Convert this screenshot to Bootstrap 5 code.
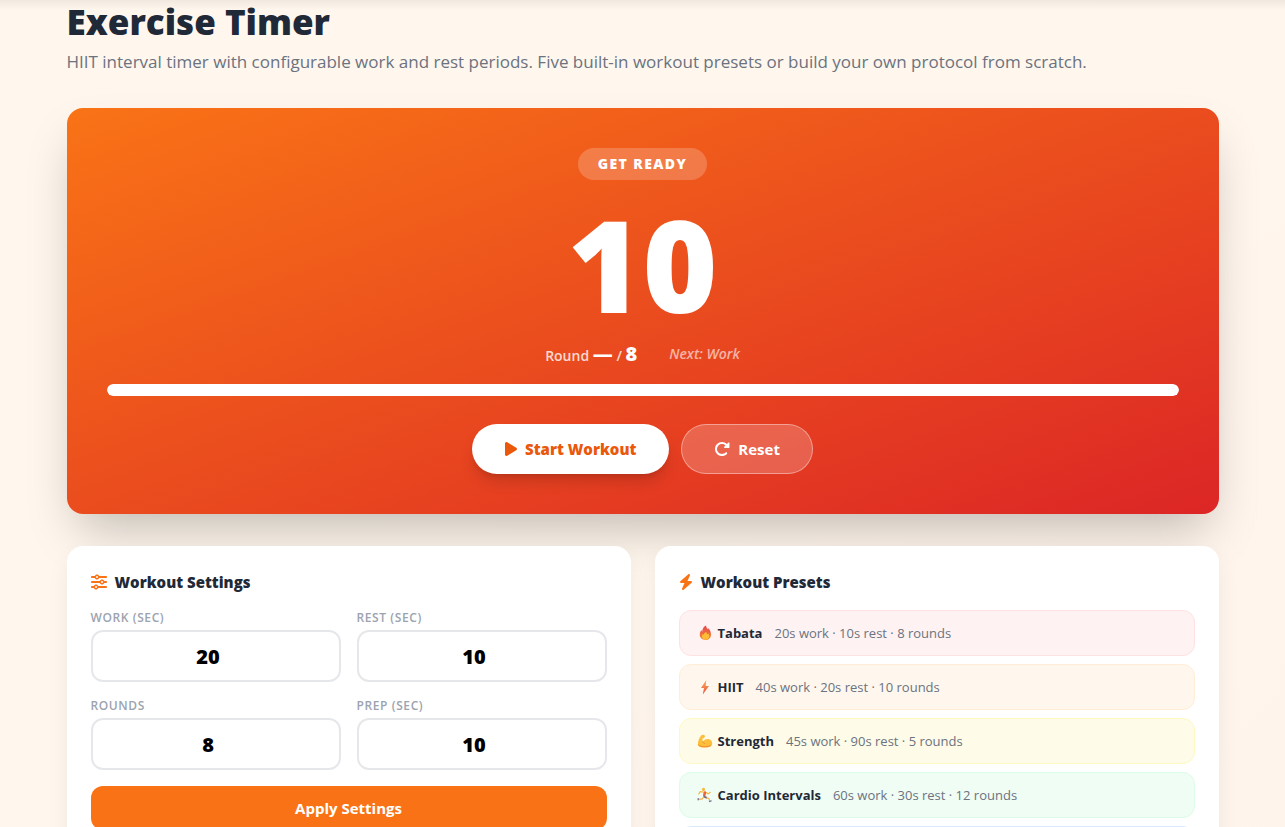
<!DOCTYPE html>
<html lang="en">
<head>
<meta charset="utf-8">
<meta name="viewport" content="width=device-width, initial-scale=1">
<title>Exercise Timer</title>
<link href="https://cdn.jsdelivr.net/npm/bootstrap@5.3.0/dist/css/bootstrap.min.css" rel="stylesheet">
<style>
  body {
    font-family: "Open Sans", "Noto Sans", sans-serif;
    color: #1f2937;
    height: 100vh;
    overflow: hidden;
    background:
      linear-gradient(rgba(0, 0, 0, .06), rgba(0, 0, 0, 0)) top / 100% 10px no-repeat,
      linear-gradient(135deg, #fff7ed 40%, #fff4ec);
  }
  .page { max-width: 1176px; padding-top: 2px; }
  .page-title { font-size: 35px; line-height: 40px; font-weight: 800; margin-bottom: 6px; }
  .page-lead { font-size: 17px; line-height: 28px; color: #6b7280; margin-bottom: 32px; }
  .icon { fill: currentColor; height: 16px; flex: none; }

  .timer-card {
    border-radius: 16px;
    padding: 40px;
    margin-bottom: 32px;
    background: linear-gradient(to bottom right, #f97316, #dc2626);
    box-shadow: 0 25px 50px -12px rgba(0, 0, 0, .25);
  }
  .phase {
    font-size: 14px; line-height: 20px; font-weight: 800; letter-spacing: .1em;
    padding: 6px 20px; background: rgba(255, 255, 255, .2);
  }
  .countdown { font-size: 128px; line-height: 128px; font-weight: 800; margin-top: 20px; }
  .round-row { font-size: 14px; line-height: 20px; font-weight: 600; margin: 16px 0 12px; }
  .round-label { color: rgba(255, 255, 255, .8); line-height: 28px; height: 28px; margin-top: -2px; margin-bottom: 2px; }
  .round-label strong { font-size: 20px; line-height: 20px; font-weight: 800; color: #fff; }
  .next-label { color: rgba(255, 255, 255, .6); }
  .timer-track { height: 12px; border-radius: 6px; background: rgba(255, 255, 255, .2); }
  .timer-track .progress-bar { background: #fff; border-radius: 6px; }
  .timer-actions { gap: 12px; margin-top: 28px; }
  .btn-pill { height: 50px; padding: 0 32px; font-size: 15px; border-radius: 25px; }
  .btn-start, .btn-start:hover { background: #fff; color: #ea580c; font-weight: 800; box-shadow: 0 10px 15px -3px rgba(0, 0, 0, .15), 0 4px 6px -4px rgba(0, 0, 0, .15); }
  .btn-reset, .btn-reset:hover { background: rgba(255, 255, 255, .2); color: #fff; font-weight: 700; border: 1px solid rgba(255, 255, 255, .4); }

  .panel { background: #fff; border-radius: 16px; padding: 24px; box-shadow: 0 10px 25px -3px rgba(0, 0, 0, .08); }
  .panel-title { font-size: 15px; line-height: 24px; font-weight: 800; }
  .panel-title .icon { color: #f97316; }
  .field-label { font-size: 12px; line-height: 16px; height: 20px; font-weight: 600; letter-spacing: .05em; color: #9ca3af; }
  .field-input, .field-input:focus {
    height: 52px; border: 2px solid #e5e7eb; border-radius: 12px; background: #fff;
    font-size: 20px; font-weight: 800; color: #000; text-align: center; box-shadow: none;
  }
  .btn-apply, .btn-apply:hover { height: 44px; border-radius: 12px; background: #f97316; color: #fff; font-size: 15px; font-weight: 700; }
  .preset {
    font-size: 13px; line-height: 20px; padding: 12px 16px; border-radius: 12px;
    border: 1px solid; text-align: left; color: #1f2937;
  }
  .preset strong { font-weight: 700; }
  .preset .detail { color: #6b7280; margin-left: 12px; }
  .emoji { width: 18px; height: 18px; flex: none; margin-right: 4px; }
  .preset-red { background: #fef2f2; border-color: #fee2e2; }
  .preset-orange { background: #fff7ed; border-color: #ffedd5; }
  .preset-yellow { background: #fefce8; border-color: #fef9c3; }
  .preset-green { background: #f0fdf4; border-color: #dcfce7; }
  .preset-blue { background: #eff6ff; border-color: #dbeafe; }
</style>
</head>
<body>
<main class="page container-fluid px-2 px-sm-4 px-xl-2">
  <div class="px-1">
    <h1 class="page-title">Exercise Timer</h1>
    <p class="page-lead">HIIT interval timer with configurable work and rest periods. Five built-in workout presets or build your own protocol from scratch.</p>

    <section class="timer-card text-white text-center">
      <div class="phase rounded-pill d-inline-block align-top">GET READY</div>
      <div class="countdown">10</div>
      <div class="round-row d-flex justify-content-center align-items-start">
        <span class="round-label me-4">Round <strong>—</strong> / <strong>8</strong></span>
        <em class="next-label ms-2">Next: Work</em>
      </div>
      <div class="progress timer-track" role="progressbar" aria-label="Time left" aria-valuenow="100" aria-valuemin="0" aria-valuemax="100">
        <div class="progress-bar w-100"></div>
      </div>
      <div class="timer-actions d-flex justify-content-center">
        <button type="button" class="btn btn-pill btn-start d-flex align-items-center gap-2">
          <svg class="icon" viewBox="0 0 384 512" aria-hidden="true"><path d="M73 39c-14.800-9.100-33.400-9.400-48.500-.9S0 62.600 0 80V432c0 17.400 9.400 33.400 24.500 41.900s33.700 8.100 48.500-.9L361 297c14.300-8.700 23-24.200 23-41s-8.700-32.200-23-41L73 39z"/></svg>
          Start Workout
        </button>
        <button type="button" class="btn btn-pill btn-reset d-flex align-items-center gap-2">
          <svg class="icon" viewBox="0 0 512 512" aria-hidden="true"><path d="M463.500 224H472c13.300 0 24-10.700 24-24V72c0-9.700-5.800-18.500-14.800-22.200s-19.300-1.700-26.200 5.200L413.400 96.600c-87.600-86.500-228.700-86.200-315.800 1c-87.500 87.500-87.500 229.300 0 316.800s229.300 87.500 316.800 0c12.500-12.500 12.500-32.800 0-45.300s-32.800-12.500-45.300 0c-62.500 62.500-163.800 62.500-226.300 0s-62.500-163.800 0-226.300c62.200-62.200 162.700-62.500 225.300-1L327 183c-6.900 6.900-8.900 17.200-5.200 26.200s12.500 14.800 22.200 14.800H463.500z"/></svg>
          Reset
        </button>
      </div>
    </section>

    <div class="row g-4">
      <div class="col-md-6">
        <form class="panel h-100">
          <h2 class="panel-title d-flex align-items-center gap-2 mb-3">
            <svg class="icon" viewBox="0 0 512 512" aria-hidden="true"><path d="M0 416c0 17.700 14.300 32 32 32l54.700 0c12.300 28.300 40.500 48 73.300 48s61-19.700 73.300-48L480 448c17.700 0 32-14.300 32-32s-14.300-32-32-32l-246.700 0c-12.300-28.300-40.500-48-73.300-48s-61 19.700-73.300 48L32 384c-17.700 0-32 14.300-32 32zm128 0a32 32 0 1 1 64 0 32 32 0 1 1 -64 0zM320 256a32 32 0 1 1 64 0 32 32 0 1 1 -64 0zm32-80c-32.800 0-61 19.700-73.300 48L32 224c-17.700 0-32 14.300-32 32s14.300 32 32 32l246.700 0c12.300 28.300 40.500 48 73.300 48s61-19.700 73.300-48l54.700 0c17.700 0 32-14.300 32-32s-14.300-32-32-32l-54.700 0c-12.300-28.300-40.500-48-73.300-48zM192 128a32 32 0 1 1 0-64 32 32 0 1 1 0 64zm73.300-64C253 35.700 224.800 16 192 16s-61 19.700-73.300 48L32 64C14.300 64 0 78.300 0 96s14.300 32 32 32l86.700 0c12.300 28.300 40.500 48 73.300 48s61-19.700 73.300-48L480 128c17.700 0 32-14.300 32-32s-14.300-32-32-32L265.300 64z"/></svg>
            Workout Settings
          </h2>
          <div class="row g-3">
            <div class="col-6">
              <label class="field-label d-block" for="work">WORK (SEC)</label>
              <input class="form-control field-input" id="work" type="number" value="20">
            </div>
            <div class="col-6">
              <label class="field-label d-block" for="rest">REST (SEC)</label>
              <input class="form-control field-input" id="rest" type="number" value="10">
            </div>
            <div class="col-6">
              <label class="field-label d-block" for="rounds">ROUNDS</label>
              <input class="form-control field-input" id="rounds" type="number" value="8">
            </div>
            <div class="col-6">
              <label class="field-label d-block" for="prep">PREP (SEC)</label>
              <input class="form-control field-input" id="prep" type="number" value="10">
            </div>
          </div>
          <button type="button" class="btn btn-apply w-100 mt-3">Apply Settings</button>
        </form>
      </div>

      <div class="col-md-6">
        <section class="panel h-100">
          <h2 class="panel-title d-flex align-items-center gap-2 mb-3">
            <svg class="icon" viewBox="0 0 448 512" aria-hidden="true"><path d="M349.400 44.600c5.900-13.700 1.500-29.700-10.600-38.500s-28.600-8-39.900 1.800l-256 224c-10 8.800-13.600 22.900-8.900 35.300S50.700 288 64 288H175.500L98.600 467.400c-5.900 13.700-1.500 29.700 10.600 38.500s28.600 8 39.900-1.800l256-224c10-8.800 13.600-22.900 8.900-35.300s-16.600-20.700-30-20.700H272.500L349.400 44.600z"/></svg>
            Workout Presets
          </h2>
          <div class="d-grid gap-2">
            <button type="button" class="preset preset-red d-flex align-items-center">
              <svg class="emoji" viewBox="0 0 18 18" aria-hidden="true">
                <defs><linearGradient id="flame" x1="0" y1="0" x2="0" y2="1"><stop offset="0" stop-color="#e5484d"/><stop offset="1" stop-color="#f58a35"/></linearGradient></defs>
                <path fill="url(#flame)" d="M10 1.500c.3 2 1 2.600 2 3.900.3-.5.400-.9.300-1.500 1.700 1.700 2.700 4 2.700 6.500 0 3.400-2.300 5.600-5.600 5.600S3.800 13.800 3.800 10.600c0-2.200.9-3.600 1.800-4.600 0 .8.200 1.300.6 1.700C6.300 5 7.500 2.700 10 1.500z"/>
                <path fill="#fdbb36" d="M10.300 8c.2 1.300.8 1.700 1.500 2.300.3-.3.400-.5.500-.9.700.9 1 1.800 1 2.900 0 2-1.500 3.400-3.700 3.400s-3.700-1.300-3.700-3.200c0-1 .4-1.900.9-2.500.2.500.4.800.8 1 .2-1.300 1-2.400 2.700-3z"/>
              </svg>
              <strong>Tabata</strong><span class="detail">20s work · 10s rest · 8 rounds</span>
            </button>
            <button type="button" class="preset preset-orange d-flex align-items-center">
              <svg class="emoji" viewBox="0 0 18 18" aria-hidden="true">
                <defs><linearGradient id="spark" x1="0" y1="0" x2="0" y2="1"><stop offset="0" stop-color="#fbb05c"/><stop offset="1" stop-color="#e9503f"/></linearGradient></defs>
                <path fill="url(#spark)" d="M10.300 2 5 10h3l-1.200 6.500L13 8H9.700z"/>
              </svg>
              <strong>HIIT</strong><span class="detail">40s work · 20s rest · 10 rounds</span>
            </button>
            <button type="button" class="preset preset-yellow d-flex align-items-center">
              <svg class="emoji" viewBox="0 0 18 18" aria-hidden="true">
                <path fill="#fdbf3b" d="M5.300 3.200c.9-.7 2.900-.7 3.500.2.500.8-.1 2.500-1.300 2.800l-.9.100c-.2 1.600-.1 2.600.3 3.500 1.200-2.300 3.400-3.300 5.800-2.700 2.300.6 3.600 2.500 3.500 4.700-.2 2.600-3 3.900-7 3.800-4.100 0-7.300-1-7.300-3.200 0-3.400 1.300-6.900 3.400-9.200z"/>
                <path fill="none" stroke="#ee8a32" stroke-linecap="round" d="M2.600 13c1.500 1.800 7.700 2.700 11.800.7M6.900 9.800c.2.700.7 1.300 1.400 1.600"/>
              </svg>
              <strong>Strength</strong><span class="detail">45s work · 90s rest · 5 rounds</span>
            </button>
            <button type="button" class="preset preset-green d-flex align-items-center">
              <svg class="emoji" viewBox="0 0 18 18" fill="none" stroke-linecap="round" stroke-linejoin="round" aria-hidden="true">
                <circle cx="7.500" cy="3.400" r="1.600" fill="#f6b83d"/>
                <path stroke="#f6b83d" stroke-width="1.200" d="M7.500 6 4 5.700 2.800 8M10.300 6.600l1.900 1.300 2-1.600"/>
                <path stroke="#f0643c" stroke-width="2.600" d="M8.900 6.600 8.300 9.200"/>
                <path stroke="#7b6a86" stroke-width="1.800" d="M8.100 10.700l2.300 1"/>
                <path stroke="#f2b24c" stroke-width="1.200" d="m7.600 11-1.500 2.200-3.500-.1M10.800 11.900l2.200.6.600 2.700"/>
                <path stroke="#6d6f95" stroke-width="1.300" d="M2.200 12.600v1.200M13.600 15.500l1.500-.6"/>
              </svg>
              <strong>Cardio Intervals</strong><span class="detail">60s work · 30s rest · 12 rounds</span>
            </button>
            <button type="button" class="preset preset-blue d-flex align-items-center" aria-label="Custom">&nbsp;</button>
          </div>
        </section>
      </div>
    </div>
  </div>
</main>
<script src="https://cdn.jsdelivr.net/npm/bootstrap@5.3.0/dist/js/bootstrap.bundle.min.js"></script>
</body>
</html>
